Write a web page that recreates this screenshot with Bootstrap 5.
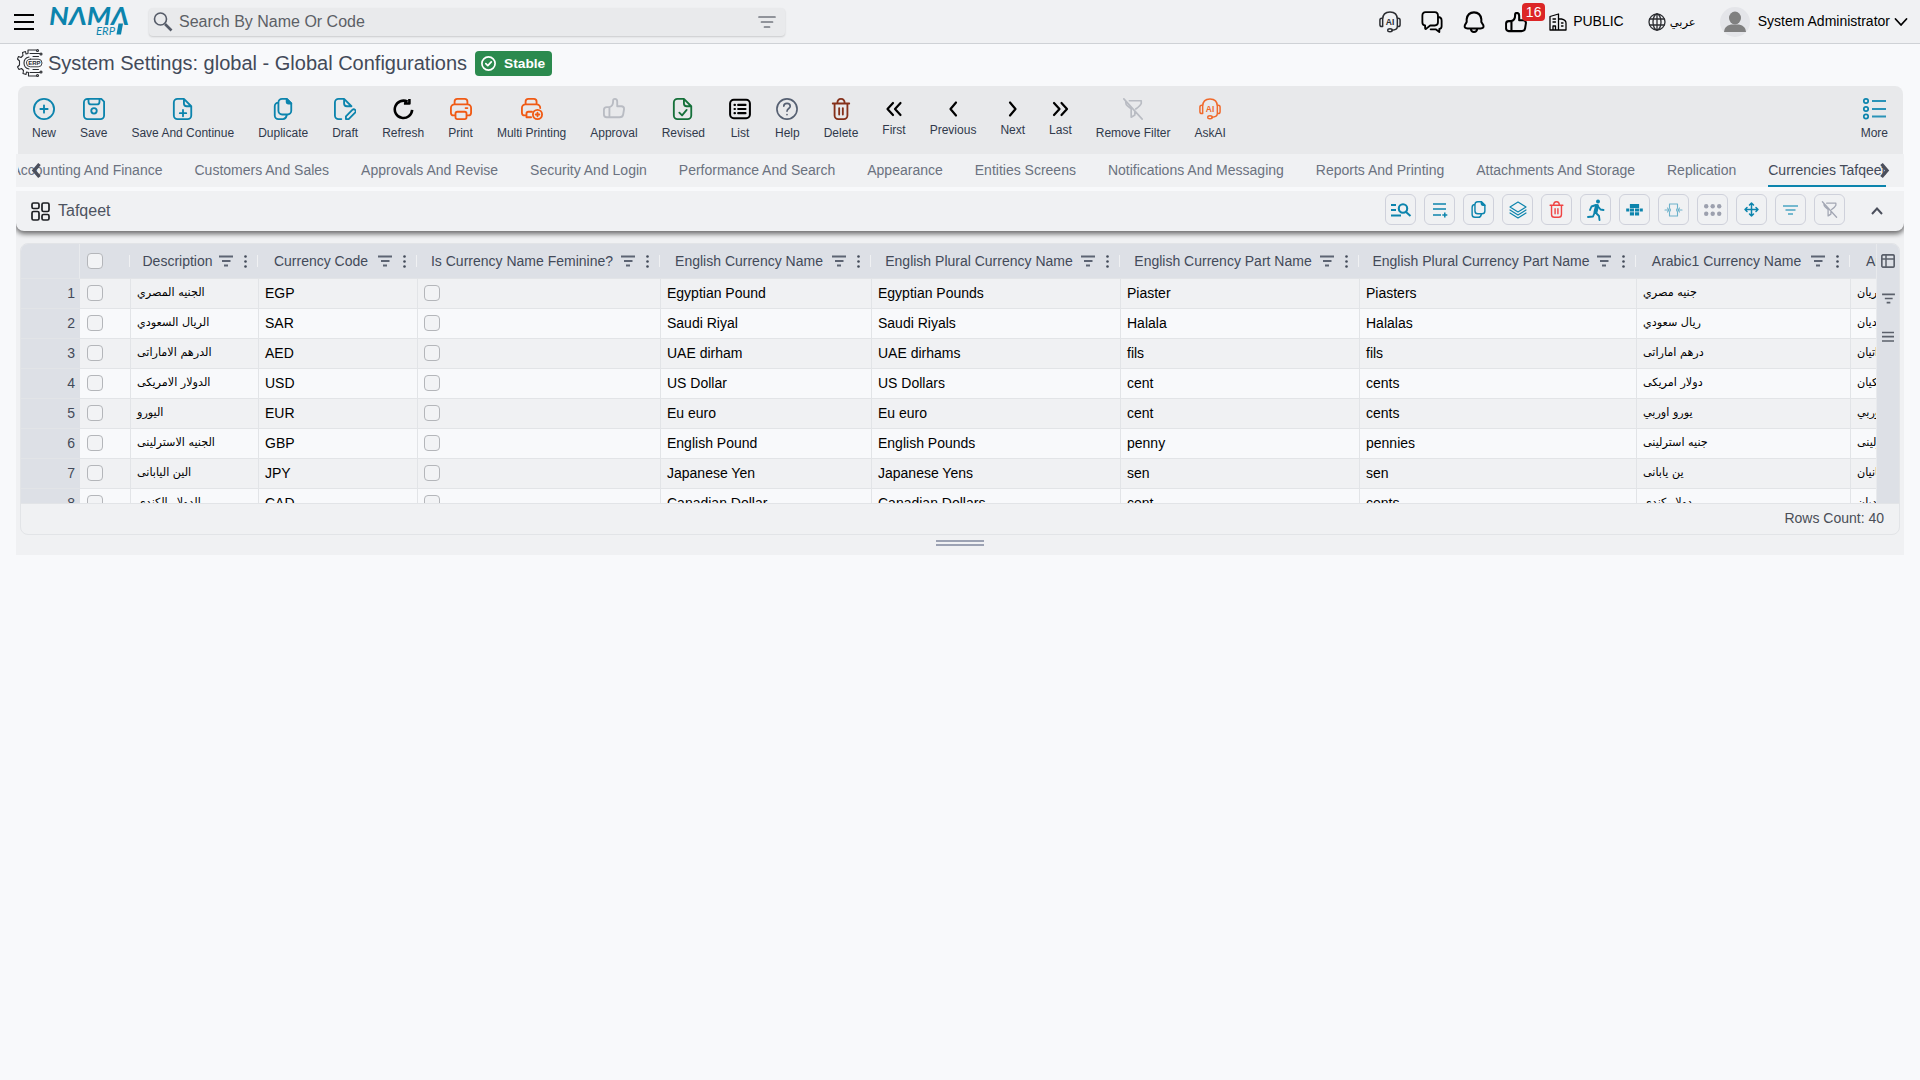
<!DOCTYPE html>
<html lang="en">
<head>
<meta charset="utf-8">
<title>System Settings - Nama ERP</title>
<meta name="viewport" content="width=device-width, initial-scale=1">
<link href="https://cdn.jsdelivr.net/npm/bootstrap@5.3.0/dist/css/bootstrap.min.css" rel="stylesheet">
<style>
:root{--teal:#0c84ad;--panel:#f0f1f3;--line:#e2e4e7;--head:#dde0e6;--ink:#434a59}
body{font-family:"Liberation Sans","DejaVu Sans",sans-serif;font-size:14px;line-height:20px;background:#f8f9fb;color:#000;overflow:hidden;height:1080px}
svg{display:block;flex:none;fill:none;stroke:currentColor;stroke-width:2;stroke-linecap:round;stroke-linejoin:round;overflow:visible}
svg text{stroke:none;fill:currentColor}
.topbar{height:44px;background:var(--panel);border-bottom:1px solid #cfd2d6;padding:0 13px 0 14px}
.searchbox{width:636px;height:28px;margin-left:19px;background:#e9eaec;border-radius:4px;box-shadow:0 1px 2px rgba(0,0,0,.16);font-size:16px;color:#5c5f66;padding:0 9px 0 4px}
.searchbox .hint{margin-left:6px}
.tops{height:43px}
.tops .txt{padding-bottom:1px}
.count-badge{position:absolute;left:17px;top:-9px;width:23px;height:18px;font-size:14px;line-height:18px;font-weight:400;padding:0;border-radius:4px;background:#dc2626}
.userpic{width:30px;height:30px;background:#e4e5e9;border-radius:50%;overflow:hidden}
.ar{font-family:"DejaVu Sans",sans-serif;font-size:11.200px}
.titlebar{height:42px;padding:0 0 4px 17px;color:var(--ink)}
.titlebar h1{font-size:20px;line-height:24px;font-weight:400;margin:0 8px 0 5px}
.stable{width:77px;height:25px;margin-top:1px;background:#2b8a4e;border-radius:4px;font-size:13.700px;padding:0 0 0 6px;gap:8px}
.tools{height:68px;margin:0 17px 0 18px;background:#e8e9eb;border-radius:8px 8px 0 0;padding:12px 15px 0 14px;color:#30394b;font-size:12px;line-height:18px}
.tools .tool{display:flex;flex-direction:column;align-items:center;white-space:nowrap}
.tools .tool svg{margin-bottom:4px}
.tools .tool .nav-ico{margin-top:3px}
.tabstrip{height:33px;margin:0 16px;background:var(--panel);color:#6b7280;padding-right:18.500px}
.tabclip{overflow:hidden;margin-left:2px}
.tabclip .tabitem{height:33px;line-height:32px;white-space:nowrap;flex:none;margin-left:32px}
.tabclip .tabitem.active{color:var(--ink);border-bottom:2px solid var(--teal)}
.arrow{position:absolute;top:9px;color:#4b4f5c;stroke-width:3.400;stroke-linecap:butt;stroke-linejoin:miter}
.section{margin:4px 16px 0;background:var(--panel);height:364px}
.secbar{height:40px;background:var(--panel);border-radius:0 0 8px 8px;box-shadow:0 2px 5px 1px rgba(0,0,0,.55);clip-path:inset(0 0 -12px 0);padding:0 21px 0 15px;font-size:16px;color:#4d5361}
.gbtn{width:31px;height:31px;padding:0;border:1px solid #cfd1db;border-radius:6px;background:var(--panel);color:var(--teal);display:flex;align-items:center;justify-content:center}
.gridbox{margin:12px 4px 0;height:292px;border:1px solid var(--line);border-radius:8px;overflow:hidden}
.gridmain{height:260px;overflow:hidden;border-bottom:1px solid var(--line)}
.gridscroll{width:1855px;overflow:hidden}
.gt{table-layout:fixed;width:1980px;border-collapse:separate;border-spacing:0;margin:0}
.gt th{height:35px;padding:0;background:var(--head);border-bottom:1px solid var(--line);font-weight:400;color:var(--ink);vertical-align:middle;position:relative;white-space:nowrap}
.gt th .lab{display:flex;align-items:center;padding:0 12px 0 8px}
.gt th .lab span{flex:1;text-align:center;white-space:nowrap;margin-right:3px}
.gt th.sep::after{content:"";position:absolute;right:1px;top:11px;width:1px;height:12px;background:#f0f1f3}
.gt td{height:30px;padding:0 0 1px 6px;border-bottom:1px solid var(--line);border-right:1px solid var(--line);white-space:nowrap;overflow:hidden;line-height:18px;vertical-align:middle}
.gt tr:nth-child(odd) td{background:#f0f1f3}
.gt tr:nth-child(even) td{background:#f8f9fb}
.gt tr td.num{background:var(--head);text-align:right;padding:0 4px 2px 0;color:var(--ink);border-right-color:var(--head)}
.gt tr td.pick{padding-left:7px}
.gt th.num{border-right:1px solid #e8eaed}
.gt .form-check-input{width:16px;height:16px;margin:0;display:block;border:1px solid #b4b6ba;border-radius:4px;background:#f2f3f5;float:none}
.side{width:23px;background:var(--head);border-left:1px solid #e8eaed;color:#5b606b}
.gridfoot{height:28px;padding:0 15px 0 0;color:#4a4e57}
.splitter{width:48px;height:6px;border:solid #9ca2b3;border-width:2px 0;margin:5px auto 0}
</style>
</head>
<body>
<svg width="0" height="0" class="position-absolute">
<defs>
<symbol id="i-new" viewBox="0 0 24 24"><circle cx="12" cy="12" r="11"/><path d="M12 8v8M8 12h8"/></symbol>
<symbol id="i-save" viewBox="0 0 24 24"><path d="M5 1h15l3 3v15a4 4 0 0 1-4 4H5a4 4 0 0 1-4-4V5a4 4 0 0 1 4-4zM6 1v3q0 3 3 3h6q3 0 3-3V1"/><circle cx="12" cy="14" r="3"/></symbol>
<symbol id="i-file" viewBox="0 0 24 24"><path d="M13 1H6a4 4 0 0 0-4 4v14a4 4 0 0 0 4 4h11a4 4 0 0 0 4-4V9zM13 1v5q0 3 3 3h5M12 13v7M8.500 16.500h7"/></symbol>
<symbol id="i-dup" viewBox="0 0 24 24"><path d="M16 1h-5a4 4 0 0 0-4 4v9a4 4 0 0 0 4 4h6a4 4 0 0 0 4-4V6zM7 5a4 4 0 0 0-4 4v10a4 4 0 0 0 4 4h5q3 0 4-4"/><path d="M16 1v3q0 2 2 2h3z" fill="currentColor"/></symbol>
<symbol id="i-draft" viewBox="0 0 24 24"><path d="M8 23H5a4 4 0 0 1-4-4V5a4 4 0 0 1 4-4h6l8 8M11 1v5q0 3 3 3h5M13 23v-3l7-7q1.500-1.500 3 0t0 3l-7 7z"/></symbol>
<symbol id="i-refresh" viewBox="0 0 24 24"><path stroke-width="2.800" d="M17 4a9.500 9.500 0 1 0 5 9M19 1v5h-6" stroke-linecap="butt"/></symbol>
<symbol id="i-print" viewBox="0 0 24 24"><path d="M5 7V4a3 3 0 0 1 3-3h8a3 3 0 0 1 3 3v3M6 19H4a3 3 0 0 1-3-3v-5a4 4 0 0 1 4-4h14a4 4 0 0 1 4 4v5a3 3 0 0 1-3 3h-2M8 15h8a2 2 0 0 1 2 2v4a2 2 0 0 1-2 2H8a2 2 0 0 1-2-2v-4a2 2 0 0 1 2-2zM17 11h2"/></symbol>
<symbol id="i-mprint" viewBox="0 0 24 24"><path d="M5 7V4a3 3 0 0 1 3-3h6a3 3 0 0 1 3 3v3M6 19H4a3 3 0 0 1-3-3v-5a4 4 0 0 1 4-4h12a4 4 0 0 1 4 4M12 15H8a2 2 0 0 0-2 2v4h5"/><circle cx="18" cy="18" r="5"/><path d="M18 16v4M16 18h4"/></symbol>
<symbol id="i-thumb" viewBox="0 0 24 24"><path d="M7 10v11H4a3 3 0 0 1-3-3v-5a3 3 0 0 1 3-3h3q4-1.500 4-6V3q0-2 2-2 2.500 0 2.500 3v5H20q3 0 3 3l-1 6q-.5 3-4 3H7"/></symbol>
<symbol id="i-rev" viewBox="0 0 24 24"><path d="M13 1H6a4 4 0 0 0-4 4v14a4 4 0 0 0 4 4h11a4 4 0 0 0 4-4V9zM13 1v5q0 3 3 3h5M8 16l3 3 5-6"/></symbol>
<symbol id="i-list" viewBox="0 0 24 24"><rect x="1.200" y="2" width="21.600" height="20" rx="4" stroke-width="2.200"/><path d="M6 7.500h.5M6 12h.5M6 16.500h.5M10 7.500h8M10 12h8M10 16.500h8" stroke-width="2.300"/></symbol>
<symbol id="i-help" viewBox="0 0 24 24"><circle cx="12" cy="12" r="11" stroke-width="1.800"/><path stroke-width="1.800" d="M8.500 9q0-3.200 3.500-3.200T15.500 9c0 2.500-3.500 2.500-3.500 5.500M12 18v.3"/></symbol>
<symbol id="i-trash" viewBox="0 0 24 24"><path d="M3 6h18M8 6q0-5 4-5t4 5M5 6v13a4 4 0 0 0 4 4h6a4 4 0 0 0 4-4V6M10 11v7M14 11v7"/></symbol>
<symbol id="i-nofilter" viewBox="0 0 24 24"><path stroke-width="1.800" d="M2 1l20 22M8 3h13v3q-1 2.500-6 6M4 4q0 3 2 4.500l4 3.500v9l4-2.500V15"/></symbol>
<symbol id="i-ai" viewBox="0 0 24 24"><path stroke-width="1.600" d="M4 9q0-8 8-8t8 8M4 8v9H3q-2 0-2-2v-5q0-2 2-2zM20 8v9h1q2 0 2-2v-5q0-2-2-2zM20 17q0 4-6 4"/><ellipse cx="12" cy="21" rx="2.500" ry="1.700" stroke-width="1.500"/></symbol>
<symbol id="i-filter" viewBox="0 0 14 12"><path stroke-width="1.900" stroke-linecap="butt" d="M0 1.500h14M3 6h8.500M5 10.500h4"/></symbol>
<symbol id="i-cols" viewBox="0 0 14 14"><rect x=".8" y=".8" width="12.400" height="12.400" rx="1.500" stroke-width="1.700"/><path stroke-width="1.500" d="M1 5h12M5 1v12"/></symbol>
</defs>
</svg>

<header class="topbar d-flex align-items-center">
  <svg width="20" height="16" style="stroke-linecap:butt"><path d="M0 1h20M0 8h20M0 15h20"/></svg>
  <svg width="80" height="29" class="ms-3" color="#0c84ad" aria-label="NAMA ERP"><text x="-1" y="18" font-family="Lato" font-weight="700" font-style="italic" font-size="25.500" textLength="80" lengthAdjust="spacingAndGlyphs">NΛMΛ</text><text x="46" y="27.500" font-family="Lato" font-style="italic" font-size="10.500" textLength="19" lengthAdjust="spacingAndGlyphs">ERP</text><path d="M68.500 16.500h4.500l-2 11h-4.500z" fill="#0c84ad" stroke="none"/></svg>
  <div class="searchbox d-flex align-items-center">
    <svg width="20" height="20" viewBox="0 0 20 20" color="#555b68"><circle cx="7.500" cy="7" r="6" stroke-width="1.600"/><path d="M12 12l6.500 6.500" stroke-width="2.600" stroke-linecap="butt"/></svg>
    <span class="flex-grow-1 hint">Search By Name Or Code</span>
    <svg width="18" height="12" viewBox="0 0 18 12" color="#73777f"><path stroke-width="1.700" d="M1 1h16M3.500 6h11M6.500 11h5"/></svg>
  </div>
  <div class="d-flex align-items-center ms-auto tops">
    <div class="d-flex align-items-center" style="gap:20px">
      <svg width="22" height="22" color="#2b2d31"><use href="#i-ai"/><text x="11" y="14" text-anchor="middle" font-size="8.500" font-weight="700">AI</text></svg>
      <svg width="22" height="22" viewBox="0 0 24 24"><path stroke-width="2" d="M5 1.300h10q3.500 0 3.500 4v7q0 3.500-3.500 3.500h-5l-4.500 3.700q-1 .5-1-1v-2.700q-3 0-3-3.500v-7q0-4 3.500-4zM18.500 6.500q4 0 4 4v6q0 2.500-2.500 3v3.500L16 20h-5.500"/></svg>
      <svg width="22" height="22" viewBox="0 0 24 24"><path stroke-width="2.200" d="M5 19q-4 0-3-3.500L4 12V9q1-7.500 8-7.500T20 9v3l2.200 3.500q1 3.500-3 3.500zM8.500 19.500Q9 22.800 12 22.800t3.500-3.300"/></svg>
      <div class="position-relative"><svg width="22" height="20" viewBox="0 0 24 22" style="stroke-width:2.300"><use href="#i-thumb" width="24" height="24"/></svg><span class="badge count-badge">16</span></div>
    </div>
    <svg width="18" height="18" viewBox="0 0 18 18" style="margin-left:22px;stroke-width:1.300"><path d="M1 17V3.500L9.500 1v16M9.500 6h3q4.500 1 4.500 4v7H1M4 6h2.500M4 9h2.500M4 17v-4h2.500v4M12.500 10h1.500M12.500 13h1.500"/></svg>
    <span class="txt" style="margin-left:6px;margin-right:1px">PUBLIC</span>
    <svg width="18" height="18" viewBox="0 0 18 18" style="margin-left:23px;stroke-width:1.300" color="#2b2d31"><circle cx="9" cy="9" r="8"/><ellipse cx="9" cy="9" rx="4" ry="8"/><path d="M9 1v16M1.800 6h14.400M1.800 12h14.400"/></svg>
    <span class="ar" style="margin-left:4px;width:25px;font-size:11.500px" lang="ar">عربي</span>
    <div class="userpic" style="margin-left:25px"><svg width="30" height="30" color="#808080" style="stroke:none;fill:currentColor"><ellipse cx="15" cy="11" rx="6" ry="6.500"/><path d="M4 25q0-6 7-7.500h8q7 1.500 7 7.500z"/></svg></div>
    <span class="txt" style="margin-left:8px">System Administrator</span>
    <svg width="12" height="8" viewBox="0 0 12 8" style="margin-left:5px"><path d="M.5 1L6 7l5.500-6" stroke-width="1.800"/></svg>
  </div>
</header>

<div class="titlebar d-flex align-items-center">
  <svg width="26" height="28" viewBox="0 0 26 28" style="stroke-width:1.100" color="#2b2d31"><path d="M11 4.500l-2 .5-.5-2.500-3 1 .5 3-2 2-2.500-1L.5 10l2 2v4l-2 2L2 20.500l2.500-1 2 2L6 24.500l3 1 .5-2.500 2 .5M12 8q-5 1-5 6t5 6M11 4.500V1h8M13 4.500h9.500M16 7.500h5.500M11.500 23.500V27H19M13 23.500h9.500M16 20.500h5.500"/><circle cx="20.500" cy="1.500" r="1"/><circle cx="24" cy="5" r="1"/><circle cx="20.500" cy="26.500" r="1"/><circle cx="24" cy="23" r="1"/><rect x="9.500" y="10.200" width="15.500" height="7.600" rx="3.800" stroke-width=".9"/><text x="17.300" y="16.200" font-size="6" font-weight="700" text-anchor="middle">ERP</text></svg>
  <h1>System Settings: global - Global Configurations</h1>
  <span class="stable d-flex align-items-center text-white fw-bold"><svg width="15" height="15" viewBox="0 0 15 15"><circle cx="7.500" cy="7.500" r="6.600" stroke-width="1.700"/><path stroke-width="1.700" d="M4.800 7.600l2 2 3.500-3.800"/></svg>Stable</span>
</div>

<div class="tools d-flex justify-content-between">
  <div class="d-flex align-items-start" style="gap:24px" id="tools"></div>
  <div class="tool"><svg width="23" height="22" viewBox="0 0 23 22" color="#2a93b8"><path stroke-width="1.800" stroke-linecap="butt" d="M9 3h14M9 11h14M9 18.500h14"/><g stroke="#0c84ad" stroke-width="1.700"><circle cx="3" cy="3" r="2.200"/><circle cx="3" cy="11" r="2.200"/><circle cx="3" cy="18.500" r="2.200"/></g></svg>More</div>
</div>

<div class="tabstrip position-relative">
  <nav class="tabclip d-flex justify-content-end">
    <span class="tabitem">Accounting And Finance</span><span class="tabitem">Customers And Sales</span><span class="tabitem">Approvals And Revise</span><span class="tabitem">Security And Login</span><span class="tabitem">Performance And Search</span><span class="tabitem">Appearance</span><span class="tabitem">Entities Screens</span><span class="tabitem">Notifications And Messaging</span><span class="tabitem">Reports And Printing</span><span class="tabitem">Attachments And Storage</span><span class="tabitem">Replication</span><span class="tabitem active">Currencies Tafqeet</span>
  </nav>
  <svg class="arrow" style="left:16px" width="8" height="15" viewBox="0 0 8 15"><path d="M7.500 1L2 7.500 7.500 14"/></svg>
  <svg class="arrow" style="right:15px" width="8" height="15" viewBox="0 0 8 15"><path d="M.5 1L6 7.500.5 14"/></svg>
</div>

<section class="section">
  <div class="secbar d-flex align-items-center">
    <svg width="19" height="19" viewBox="0 0 19 19" color="#1d1f23" style="stroke-width:1.700"><rect x="1" y="1" width="7" height="5.500" rx="1.500"/><rect x="11" y="1" width="7" height="8.500" rx="1.500"/><rect x="1" y="9.500" width="7" height="8.500" rx="1.500"/><rect x="11" y="12.500" width="7" height="5.500" rx="1.500"/></svg>
    <span style="margin-left:8px">Tafqeet</span>
    <div class="d-flex ms-auto" style="gap:8px;margin-top:-3px">
      <button class="btn gbtn"><svg width="20" height="14" viewBox="0 0 20 14" style="stroke-linecap:butt"><path d="M0 2h5M0 7h5M0 12.500h10"/><circle cx="12" cy="5.500" r="4.200" stroke-width="2.100"/><path d="M15 9l4.500 4"/></svg></button>
      <button class="btn gbtn"><svg width="16" height="16" viewBox="0 0 16 16" style="stroke-width:1.500;stroke-linecap:butt"><path d="M1 2h13M1 7h13M1 13h8M12.800 10.500v5M10.300 13h5"/></svg></button>
      <button class="btn gbtn"><svg width="17" height="17"><use href="#i-dup"/></svg></button>
      <button class="btn gbtn"><svg width="18" height="18" viewBox="0 0 18 18" style="stroke-width:1.200"><path d="M9 1l8 5-8 5-8-5zM1 9l8 5 8-5M1 12l8 5 8-5"/></svg></button>
      <button class="btn gbtn" style="color:#ef4444"><svg width="17" height="17"><use href="#i-trash"/></svg></button>
      <button class="btn gbtn"><svg width="18" height="22" viewBox="0 0 18 22"><circle cx="11" cy="2.500" r="2" fill="currentColor" stroke="none"/><path d="M10 7L8.500 13" stroke-width="4"/><path stroke-width="1.900" d="M9 6L4.500 7.500 3 11M11.500 8l2 2.500 3 .5M9 14l3 3 .5 4M7.500 14L6 17.500 1 18"/></svg></button>
      <button class="btn gbtn"><svg width="17" height="12" viewBox="0 0 18 13" style="stroke:none;fill:currentColor"><path d="M4 0h10v4.300H4zM4 5h4.500v3H4zM9.500 5H14v3H9.500zM4 9h4.500v3.500H4zM9.500 9H14v3.500H9.500zM0 5h3.300v3H0zM14.700 5H18v3h-3.300z"/></svg></button>
      <button class="btn gbtn" style="color:#6db2cb"><svg width="17" height="14" viewBox="0 0 17 14" style="stroke-width:1.100"><path d="M4.500 5V1h8v4M4.500 9v4h8V9M4.500 5l1 2-1 2M12.500 5l-1 2 1 2M0 7h4M2.500 5L4 7 2.500 9M17 7h-4M14.500 5L13 7l1.500 2"/></svg></button>
      <button class="btn gbtn" style="color:#9ca0ae"><svg width="18" height="12" viewBox="0 0 18 12" style="stroke:none;fill:currentColor"><circle cx="2.200" cy="2.300" r="2.200"/><circle cx="8.700" cy="2.300" r="2.200"/><circle cx="15.200" cy="2.300" r="2.200"/><circle cx="2.200" cy="9.700" r="2.200"/><circle cx="8.700" cy="9.700" r="2.200"/><circle cx="15.200" cy="9.700" r="2.200"/></svg></button>
      <button class="btn gbtn"><svg width="15" height="15" viewBox="0 0 15 15" style="stroke-width:1.500"><path d="M7.500 1v13M1 7.500h13M5.500 3l2-2 2 2M5.500 12l2 2 2-2M3 5.500l-2 2 2 2M12 5.500l2 2-2 2"/></svg></button>
      <button class="btn gbtn"><svg width="15" height="10" viewBox="0 0 15 10" color="#4ba5c3" style="stroke-width:1.400;stroke-linecap:butt"><path d="M0 1h15M2.500 5h10M5 9h5"/></svg></button>
      <button class="btn gbtn" style="color:#a3a7b4"><svg width="17" height="17"><use href="#i-nofilter"/></svg></button>
    </div>
    <svg width="12" height="8" viewBox="0 0 12 8" style="margin-left:26px" color="#4b4f5c"><path stroke-linecap="butt" stroke-linejoin="miter" d="M1 7L6 1.500 11 7"/></svg>
  </div>
  <div class="gridbox">
    <div class="gridmain d-flex">
      <div class="gridscroll">
        <table class="gt">
          <colgroup><col style="width:59px"><col style="width:51px"><col style="width:128px"><col style="width:159px"><col style="width:243px"><col style="width:211px"><col style="width:249px"><col style="width:239px"><col style="width:277px"><col style="width:214px"><col style="width:150px"></colgroup>
          <thead><tr id="heads"></tr></thead>
          <tbody id="rows"></tbody>
        </table>
      </div>
      <div class="side d-flex flex-column align-items-center">
        <svg width="14" height="14" style="margin-top:10px"><use href="#i-cols"/></svg>
        <svg width="13" height="11" style="margin-top:25px"><use href="#i-filter"/></svg>
        <svg width="12" height="11" viewBox="0 0 12 11" style="margin-top:27px;stroke-linecap:butt"><path d="M0 1.500h12M0 5.700h12M0 10h12" stroke-width="1.700"/></svg>
      </div>
    </div>
    <div class="gridfoot d-flex align-items-center justify-content-end">Rows Count: 40</div>
  </div>
  <div class="splitter"></div>
</section>

<script src="https://cdn.jsdelivr.net/npm/bootstrap@5.3.0/dist/js/bootstrap.bundle.min.js"></script>
<script>
const tools = [
  ['New','new','#0c84ad'],['Save','save','#0c84ad'],['Save And Continue','file','#0c84ad'],['Duplicate','dup','#0c84ad'],
  ['Draft','draft','#0c84ad'],['Refresh','refresh','#000'],['Print','print','#f05a14'],['Multi Printing','mprint','#f05a14'],
  ['Approval','thumb','#b9bcc3'],['Revised','rev','#15703a'],['List','list','#000'],['Help','help','#566072'],['Delete','trash','#85301a'],
  ['First','M7 2L1.500 8 7 14M14.500 2L9 8l5.500 6'],['Previous','M11 1.500L5.500 8l5.500 6.500'],['Next','M6 1.500L11.500 8 6 14.500'],['Last','M2 2l5.500 6L2 14M9.500 2L15 8l-5.500 6'],
  ['Remove Filter','nofilter','#b9bcc3'],['AskAI','ai','#f0692b']
];
document.getElementById('tools').innerHTML = tools.map(([t, i, c]) => '<div class="tool">' + (c
  ? `<svg width="22" height="22" color="${c}"><use href="#i-${i}"/>${i === 'ai' ? '<text x="11" y="14" text-anchor="middle" font-size="8.500" font-weight="700">AI</text>' : ''}</svg>`
  : `<svg class="nav-ico" width="17" height="16" viewBox="0 0 17 16" color="#000" style="stroke-width:2.200"><path d="${i}"/></svg>`) + t + '</div>').join('');

const heads = ['Description','Currency Code','Is Currency Name Feminine?','English Currency Name','English Plural Currency Name','English Currency Part Name','English Plural Currency Part Name','Arabic1 Currency Name'];
const box = '<input class="form-check-input" type="checkbox">';
document.getElementById('heads').innerHTML = `<th class="num"></th><th class="sep"><div style="padding-left:7px">${box}</div></th>` + heads.map(h =>
  `<th class="sep"><div class="lab"><span>${h}</span><svg width="14" height="12" color="#5d6473"><use href="#i-filter"/></svg><svg width="3" height="13" viewBox="0 0 3 13" style="margin-left:11px;stroke:none;fill:#434a59"><circle cx="1.500" cy="1.500" r="1.300"/><circle cx="1.500" cy="6.500" r="1.300"/><circle cx="1.500" cy="11.500" r="1.300"/></svg></div></th>`).join('') + '<th style="padding-left:15px">Arabic2 Currency Name</th>';

const rows = [
  ['الجنيه المصري','EGP','Egyptian Pound','Egyptian Pounds','Piaster','Piasters','جنيه مصري','جنيهان مصريان'],
  ['الريال السعودي','SAR','Saudi Riyal','Saudi Riyals','Halala','Halalas','ريال سعودي','ريالان سعوديان'],
  ['الدرهم الاماراتى','AED','UAE dirham','UAE dirhams','fils','fils','درهم اماراتى','درهمان اماراتيان'],
  ['الدولار الامريكى','USD','US Dollar','US Dollars','cent','cents','دولار امريكى','دولاران امريكيان'],
  ['اليورو','EUR','Eu euro','Eu euro','cent','cents','يورو اوربي','يورو اوربي'],
  ['الجنيه الاسترلينى','GBP','English Pound','English Pounds','penny','pennies','جنيه استرلينى','جنيه استرلينى'],
  ['الين اليابانى','JPY','Japanese Yen','Japanese Yens','sen','sen','ين يابانى','ين يابانيان'],
  ['الدولار الكندى','CAD','Canadian Dollar','Canadian Dollars','cent','cents','دولار كندى','دولاران كنديان']
];
document.getElementById('rows').innerHTML = rows.map((r, i) =>
  `<tr><td class="num">${i + 1}</td><td class="pick">${box}</td><td class="ar">${r[0]}</td><td>${r[1]}</td><td>${box}</td>` +
  r.slice(2, 6).map(c => `<td>${c}</td>`).join('') + `<td class="ar">${r[6]}</td><td class="ar">${r[7]}</td></tr>`).join('');
</script>
</body>
</html>
